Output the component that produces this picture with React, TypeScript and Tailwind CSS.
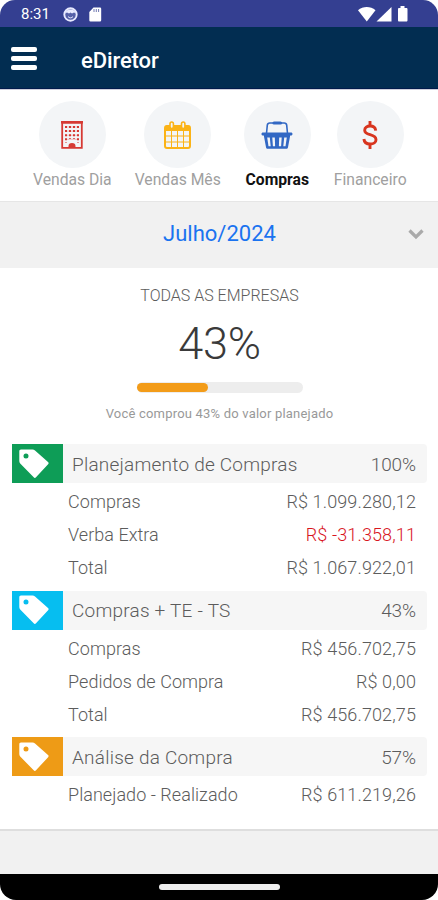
import type { ReactNode } from "react";

function Tag() {
  return (
    <svg width="30" height="30" viewBox="0 0 30 30" fill="white">
      <path
        fillRule="evenodd"
        d="M2 .5h11.500c1 0 1.800.3 2.500 1l13 11.400c.8.7.8 1.600.1 2.300L17 28.300c-.7.8-1.600.8-2.300 0L1.200 14.500C.5 13.800.3 13 .3 12V2.300C.3 1.200.9.500 2 .5zM7 4.500a2.500 2.500 0 1 0 0 5a2.500 2.500 0 1 0 0-5z"
      />
    </svg>
  );
}

function Building() {
  return (
    <svg width="22" height="28" viewBox="0 0 22 28" fill="none" stroke="#d63a34">
      <path d="M1.200 1.500h19.600v25.300H1.200z" strokeWidth="1.800" />
      <path d="M0 1.200h22" strokeWidth="2.400" />
      <path d="M5 5v17M9 5v13M13 5v13M17 5v17" strokeWidth="2" strokeDasharray="2 2.100" />
      <path d="M4 6h14M4 10.100h14M4 14.200h14M4 18.300h14" strokeWidth=".6" opacity=".5" />
      <path d="M7.500 27v-2a3.500 3 0 0 1 7 0v2z" fill="#d63a34" stroke="none" />
    </svg>
  );
}

function Calendar() {
  return (
    <svg width="27" height="28" viewBox="0 0 27 28" fill="none" stroke="#fbb317">
      <rect x="1" y="5" width="25" height="22" rx="2" strokeWidth="2" />
      <path d="M1 10V6a1.500 1.500 0 0 1 1.500-1.500h22A1.500 1.500 0 0 1 26 6v4z" fill="#fbb317" stroke="none" />
      <path d="M7.500 10v17M13.500 10v17M19.500 10v17M1 15h25M1 21h25" strokeWidth="1" />
      <rect x="6" y="1" width="3.400" height="6.500" rx="1.700" fill="#f3f5f7" strokeWidth="1.600" />
      <rect x="17.500" y="1" width="3.400" height="6.500" rx="1.700" fill="#f3f5f7" strokeWidth="1.600" />
    </svg>
  );
}

function Basket() {
  return (
    <svg width="32" height="28" viewBox="0 0 32 28" fill="none" stroke="#3268c4">
      <path d="M5.500 12.500L6.300 4.200C6.500 2.800 7.400 2 8.700 2h14.600c1.300 0 2.200.8 2.400 2.200l.8 8.300" strokeWidth="1.600" />
      <path d="M13 2h6.500" strokeWidth="3.200" strokeLinecap="round" />
      <path
        fill="#3268c4"
        stroke="none"
        fillRule="evenodd"
        d="M1.500 11.500h29c1.300 0 1.300 3 0 3h-1.300L27 26.300c-.2 1-.8 1.500-1.700 1.500H6.700c-.9 0-1.500-.5-1.700-1.500L2.800 14.500H1.500c-1.300 0-1.300-3 0-3zM6.200 16.500l1.300 8.800h2.200L8.800 16.500zM11.300 16.500l.6 8.800h2.200l-.3-8.800zM18.200 16.500l-.3 8.800h2.200l.6-8.800zM23.200 16.500l-.9 8.800h2.200l1.300-8.800z"
      />
    </svg>
  );
}

function Dollar() {
  return (
    <svg width="16" height="28" viewBox="0 0 16 28" fill="none" stroke="#d8351f" strokeWidth="2.900">
      <path d="M8 0v5M8 23v5" />
      <path d="M13.700 9.600C13.400 6.600 11.200 5 8.100 5 5 5 2.700 6.600 2.700 9.200c0 2.600 2.200 3.600 5.400 4.500 3.800 1.100 5.900 2.200 5.900 5 0 2.700-2.500 4.300-5.900 4.300-3.500 0-5.900-1.800-6.200-5" />
    </svg>
  );
}

function Tab({ label, active, children }: { label: ReactNode; active?: boolean; children: ReactNode }) {
  return (
    <div className="flex flex-col items-center">
      <div className="flex size-[67px] items-center justify-center rounded-full bg-[#f3f5f7]">{children}</div>
      <div
        className={
          active
            ? "mt-[2px] text-[15.7px] leading-5 font-bold text-[#111]"
            : "mt-[2px] text-[15.7px] leading-5 text-[#a0a0a0]"
        }
      >
        {label}
      </div>
    </div>
  );
}

type Line = { name: string; value: string; negative?: boolean };

function Section({ title, pct, color, lines }: { title: string; pct: string; color: string; lines: Line[] }) {
  return (
    <section className="pb-[6.5px]">
      <div className="flex h-[39px] items-center rounded-r-[4px] bg-[#f6f6f6] pr-[11px] text-[19px] text-[#5c5c5c]">
        <div className={`flex h-full w-[51px] items-center pl-[7px] ${color}`}>
          <Tag />
        </div>
        <span className="ml-[9px] flex-1 pt-[3px] font-light tracking-[0.22px]">{title}</span>
        <span className="pt-[3px] font-light tracking-[-0.1px]">{pct}</span>
      </div>
      <div className="pt-[2px] pr-[11px] pl-[56px] text-[18px] font-light text-[#5c5c5c]">
        {lines.map((l) => (
          <div key={l.name} className="flex h-[33px] items-center justify-between">
            <span className="tracking-[0.05px]">{l.name}</span>
            <span className={l.negative ? "tracking-[0.12px] text-[#d8161e]" : "tracking-[0.12px]"}>{l.value}</span>
          </div>
        ))}
      </div>
    </section>
  );
}

export default function App() {
  return (
    <div className="h-[900px] w-[438px] overflow-hidden bg-white font-['Roboto',sans-serif]">
      <div className="flex h-full flex-col overflow-hidden rounded-t-[15px] rounded-b-[16px] bg-white">
        <div className="flex h-[27px] shrink-0 items-center bg-[#343f91] pr-[29px] pl-[21px] text-white">
          <span className="mt-[2px] w-[42px] text-[15px]">8:31</span>
          <svg width="15" height="15" viewBox="0 0 15 15" className="mt-[1px]">
            <circle cx="7.500" cy="7.500" r="6.200" fill="#5560a8" stroke="#e8eaff" strokeWidth="1.900" />
            <path d="M2 6.500C2.500 1 12.500 1 13 6.500L11 5.500 9 6.500 7.500 5.500 6 6.500 4 5.500z" fill="#e8eaff" />
            <path d="M5 9.500c1 1.800 4 1.800 5 0" fill="none" stroke="#e8eaff" strokeWidth="1" />
          </svg>
          <svg width="13" height="15" viewBox="0 0 13 15" className="mt-[1px] ml-[11px]">
            <path d="M4.500.5H11a1.200 1.200 0 0 1 1.200 1.200v11.600a1.200 1.200 0 0 1-1.200 1.200H1.500a1.200 1.200 0 0 1-1.200-1.200V5z" fill="white" />
            <path d="M5 2v3M7.300 2v3M9.600 2v3" stroke="#343f91" strokeWidth=".7" />
          </svg>
          <div className="flex-1" />
          <svg width="51" height="17" viewBox="0 0 51 17" fill="white" className="mt-[2px]">
            <path d="M0 4.200C5-.2 12.500-.2 17.500 4.200L8.800 15.500z" />
            <path d="M33.500 1v14.500H18.500z" />
            <path d="M42.500 0h4v2h1.800c.8 0 1.200.5 1.200 1.200v11.100c0 .8-.4 1.200-1.200 1.200h-7.100c-.8 0-1.200-.4-1.200-1.200V3.200c0-.7.4-1.200 1.200-1.200h1.300z" />
          </svg>
        </div>
        <header className="flex h-[62px] shrink-0 items-center border-b border-[#001a4b] bg-[#022d51] pl-[11px] text-white">
          <div className="mt-[2px] flex w-[26px] flex-col gap-[4px]">
            <i className="h-[5px] rounded-[2px] bg-white" />
            <i className="h-[5px] rounded-[2px] bg-white" />
            <i className="h-[5px] rounded-[2px] bg-white" />
          </div>
          <h1 className="mt-[5px] ml-[44px] text-[22px] font-medium tracking-[-0.1px]">eDiretor</h1>
        </header>
        <nav className="flex h-[112px] shrink-0 gap-[23px] border-t border-[#cfcfdc] pt-[11px] pl-[33px]">
          <Tab label="Vendas Dia"><Building /></Tab>
          <Tab label="Vendas Mês"><Calendar /></Tab>
          <Tab label="Compras" active><Basket /></Tab>
          <Tab label="Financeiro"><Dollar /></Tab>
        </nav>
        <div className="flex h-[67px] shrink-0 items-center border-t border-[#e6e6e6] bg-[#f1f1f1] pr-[14px] pl-[31px]">
          <span className="mb-[3px] flex-1 text-center text-[22px] text-[#1a73f0]">Julho/2024</span>
          <svg width="16" height="11" viewBox="0 0 16 11" fill="none" stroke="#aaa" strokeWidth="3.200" className="mb-[1px]">
            <path d="M1.500 1.500L8 8l6.500-6.500" />
          </svg>
        </div>
        <div className="flex h-[176px] shrink-0 flex-col items-center pl-[1px] text-[#5c5c5c]">
          <div className="mt-[16px] text-[16px] leading-6 font-light">TODAS AS EMPRESAS</div>
          <div className="mt-[10px] text-[45px] leading-[52px] font-light tracking-[-0.2px] text-[#3a3a3a]">43%</div>
          <div className="mt-[12px] h-[11px] w-[166px] rounded-full bg-[#ededed] py-[1px]">
            <div className="h-[9px] w-[43%] rounded-full bg-[#f39c19]" />
          </div>
          <div className="mt-[11px] text-[13px] leading-5 tracking-[0.2px] text-[#999]">Você comprou 43% do valor planejado</div>
        </div>
        <main className="h-[387px] shrink-0 border-b-2 border-[#dedede] pr-[11px] pl-[12px]">
          <Section
            title="Planejamento de Compras"
            pct="100%"
            color="bg-[#0e9d57]"
            lines={[
              { name: "Compras", value: "R$ 1.099.280,12" },
              { name: "Verba Extra", value: "R$ -31.358,11", negative: true },
              { name: "Total", value: "R$ 1.067.922,01" },
            ]}
          />
          <Section
            title="Compras + TE - TS"
            pct="43%"
            color="bg-[#06bef0]"
            lines={[
              { name: "Compras", value: "R$ 456.702,75" },
              { name: "Pedidos de Compra", value: "R$ 0,00" },
              { name: "Total", value: "R$ 456.702,75" },
            ]}
          />
          <Section
            title="Análise da Compra"
            pct="57%"
            color="bg-[#ee9b16]"
            lines={[{ name: "Planejado - Realizado", value: "R$ 611.219,26" }]}
          />
        </main>
        <div className="flex-1 bg-[#f1f1f1]" />
        <footer className="flex h-[26px] shrink-0 justify-center bg-black pt-[10px]">
          <div className="h-[6px] w-[121px] rounded-full bg-[#eee]" />
        </footer>
      </div>
    </div>
  );
}
